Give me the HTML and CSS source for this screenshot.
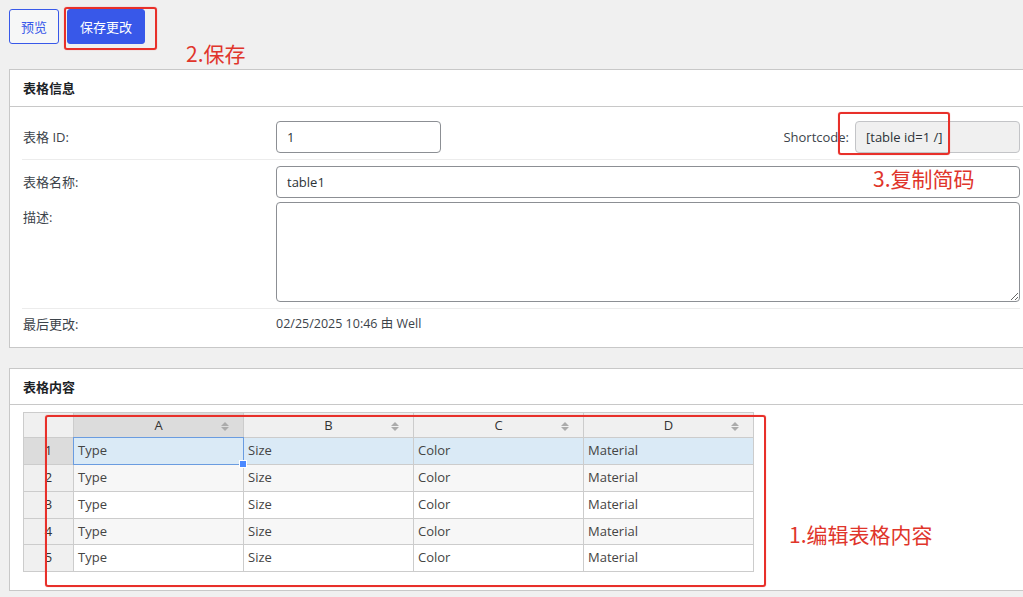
FILE: index.html
```html
<!DOCTYPE html>
<html lang="zh-CN">
<head>
<meta charset="utf-8">
<title>表格编辑</title>
<link rel="stylesheet" href="styles.css">
</head>
<body>
<div class="page">
  <div class="toolbar">
    <button class="btn btn-secondary" type="button">预览</button>
    <button class="btn btn-primary" type="button">保存更改</button>
  </div>

  <section class="panel panel-info">
    <h2 class="panel-title">表格信息</h2>
    <div class="panel-body">
      <div class="row row-id">
        <span class="lbl">表格 ID:</span>
        <input class="field field-id" type="text" value="1">
        <div class="shortcode">
          <span class="sc-label">Shortcode:</span>
          <input class="field field-sc" type="text" value="[table id=1 /]" readonly>
        </div>
      </div>
      <div class="row row-name">
        <span class="lbl">表格名称:</span>
        <input class="field field-name" type="text" value="table1">
      </div>
      <div class="row row-desc">
        <span class="lbl lbl-top">描述:</span>
        <textarea class="field field-desc"></textarea>
      </div>
      <div class="row row-last">
        <span class="lbl">最后更改:</span>
        <span class="value">02/25/2025 10:46 由 Well</span>
      </div>
    </div>
  </section>

  <section class="panel panel-content">
    <h2 class="panel-title title-2">表格内容</h2>
    <div class="panel-body body-2">
      <div class="grid">
        <div class="cell corner"></div>
        <div class="cell colhead active">A<span class="sort"></span></div>
        <div class="cell colhead">B<span class="sort"></span></div>
        <div class="cell colhead">C<span class="sort"></span></div>
        <div class="cell colhead">D<span class="sort"></span></div>

        <div class="cell rowhead active">1</div>
        <div class="cell hl selected">Type</div>
        <div class="cell hl">Size</div>
        <div class="cell hl">Color</div>
        <div class="cell hl">Material</div>

        <div class="cell rowhead">2</div>
        <div class="cell even">Type</div>
        <div class="cell even">Size</div>
        <div class="cell even">Color</div>
        <div class="cell even">Material</div>

        <div class="cell rowhead">3</div>
        <div class="cell">Type</div>
        <div class="cell">Size</div>
        <div class="cell">Color</div>
        <div class="cell">Material</div>

        <div class="cell rowhead">4</div>
        <div class="cell even">Type</div>
        <div class="cell even">Size</div>
        <div class="cell even">Color</div>
        <div class="cell even">Material</div>

        <div class="cell rowhead">5</div>
        <div class="cell">Type</div>
        <div class="cell">Size</div>
        <div class="cell">Color</div>
        <div class="cell">Material</div>
      </div>
    </div>
  </section>

  <div class="mark box-save"></div>
  <div class="mark box-sc"></div>
  <div class="mark box-table"></div>
  <div class="note note-save">2.保存</div>
  <div class="note note-sc">3.复制简码</div>
  <div class="note note-table">1.编辑表格内容</div>
</div>
</body>
</html>
```
FILE: styles.css
```css
* { box-sizing: border-box; }

html, body {
  margin: 0;
  padding: 0;
  background: #f0f0f0;
  overflow: hidden;
}

body {
  font-family: "Open Sans", "Noto Sans CJK SC", sans-serif;
  font-size: 13px;
  color: #3c434a;
}

.page {
  position: relative;
  width: 1023px;
  height: 597px;
  overflow: hidden;
}

/* toolbar */
.toolbar {
  display: flex;
  gap: 8px;
  padding: 9px 0 0 9px;
  height: 69px;
}

.btn {
  height: 35px;
  padding: 0 11px;
  border-radius: 3px;
  font-family: "Noto Sans CJK SC", sans-serif;
  font-size: 13px;
  line-height: 33px;
  cursor: pointer;
}

.btn-secondary {
  background: #f6f7f7;
  border: 1px solid #3858e9;
  color: #3858e9;
}

.btn-primary {
  background: #3858e9;
  border: 1px solid #3858e9;
  color: #fff;
  padding: 0 12px;
}

/* panels */
.panel {
  margin-left: 9px;
  width: 1025px;
  background: #fff;
  border: 1px solid #c8c8c8;
}

.panel-content {
  margin-top: 20px;
}

.panel-title {
  margin: 0;
  height: 37px;
  line-height: 36px;
  padding-left: 13px;
  border-bottom: 1px solid #c8c8c8;
  font-family: "Noto Sans CJK SC", sans-serif;
  font-size: 13px;
  font-weight: 700;
  color: #1d2327;
}

.title-2 {
  height: 36px;
  line-height: 35px;
}

.panel-body {
  padding: 0 13px 0 12px;
}

.row {
  display: flex;
  align-items: center;
}

.lbl {
  flex: 0 0 254px;
  padding-left: 1px;
  line-height: 18px;
  color: #3c434a;
}

.lbl-top {
  align-self: flex-start;
  margin-top: 6px;
}

.row-id {
  padding: 14px 0 6px;
  border-bottom: 1px solid #ececec;
}

.row-name {
  padding-top: 6px;
}

.row-desc {
  padding: 4px 0 6px;
  border-bottom: 1px solid #ececec;
}

.row-last {
  padding: 6px 0 14px;
}

.value {
  line-height: 18px;
  font-size: 12.5px;
  color: #3c434a;
}

.field {
  height: 32px;
  border: 1px solid #8c8f94;
  border-radius: 4px;
  padding: 0 10px;
  font-family: "Open Sans", sans-serif;
  font-size: 13px;
  color: #2c3338;
  background: #fff;
  outline: none;
}

.field-id { width: 165px; }

.field-name { flex: 1; }

.field-desc {
  flex: 1;
  height: 100px;
  resize: vertical;
  padding: 6px 10px;
}

.shortcode {
  margin-left: auto;
  display: flex;
  align-items: center;
  gap: 6px;
}

.sc-label {
  color: #3c434a;
}

.field-sc {
  width: 165px;
  background: #f0f0f0;
  border-color: #c3c4c7;
  color: #2c3338;
}

/* grid */
.body-2 {
  padding: 7px 13px 18px 13px;
}

.grid {
  display: grid;
  grid-template-columns: 50px repeat(4, 170px);
  grid-template-rows: 25px 27px 27px 27px 26px 27px;
  width: 731px;
  border-top: 1px solid #cccccc;
  border-left: 1px solid #cccccc;
}

.cell {
  position: relative;
  border-right: 1px solid #cccccc;
  border-bottom: 1px solid #cccccc;
  padding-left: 4px;
  line-height: 25px;
  font-family: "Open Sans", sans-serif;
  font-size: 13px;
  color: #444;
  background: #fff;
  white-space: nowrap;
}

.corner { background: #f0f0f0; }

.colhead {
  background: #f0f0f0;
  text-align: center;
  padding-left: 0;
  line-height: 24px;
  color: #333;
}

.rowhead {
  background: #f0f0f0;
  text-align: center;
  padding-left: 0;
  color: #333;
}

.colhead.active,
.rowhead.active {
  background: #dcdcdc;
}

.sort {
  position: absolute;
  right: 13px;
  top: 9px;
  width: 9px;
  height: 9px;
}

.sort::before,
.sort::after {
  content: "";
  position: absolute;
  left: 0;
  border-left: 4.5px solid transparent;
  border-right: 4.5px solid transparent;
}

.sort::before {
  top: 0;
  border-bottom: 4px solid #ababab;
}

.sort::after {
  bottom: 0;
  border-top: 4px solid #ababab;
}

.hl { background: #daeaf6; }

.even { background: #f7f7f7; }

.selected::after {
  content: "";
  position: absolute;
  left: -1px;
  top: -1px;
  right: -1px;
  bottom: -1px;
  border: 1px solid #6a9ce0;
  pointer-events: none;
}

.selected::before {
  content: "";
  position: absolute;
  right: -4px;
  bottom: -4px;
  width: 6px;
  height: 6px;
  background: #4b89ff;
  border: 1px solid #fff;
  z-index: 2;
}

/* annotations */
.mark {
  position: absolute;
  border: 2px solid #e8302a;
  border-radius: 3px;
  box-shadow: 0 0 1px rgba(232, 48, 42, 0.6);
  pointer-events: none;
}

.box-save {
  left: 64px;
  top: 7px;
  width: 93px;
  height: 43px;
}

.box-sc {
  left: 838px;
  top: 112px;
  width: 112px;
  height: 43px;
}

.box-table {
  left: 45px;
  top: 415px;
  width: 721px;
  height: 172px;
}

.note {
  position: absolute;
  font-family: "Noto Sans CJK SC", sans-serif;
  font-size: 21px;
  line-height: 24px;
  color: #e0352b;
  white-space: nowrap;
}

.note-save { left: 186px; top: 41px; }
.note-sc { left: 873px; top: 166px; }
.note-table { left: 789px; top: 522px; }
```
